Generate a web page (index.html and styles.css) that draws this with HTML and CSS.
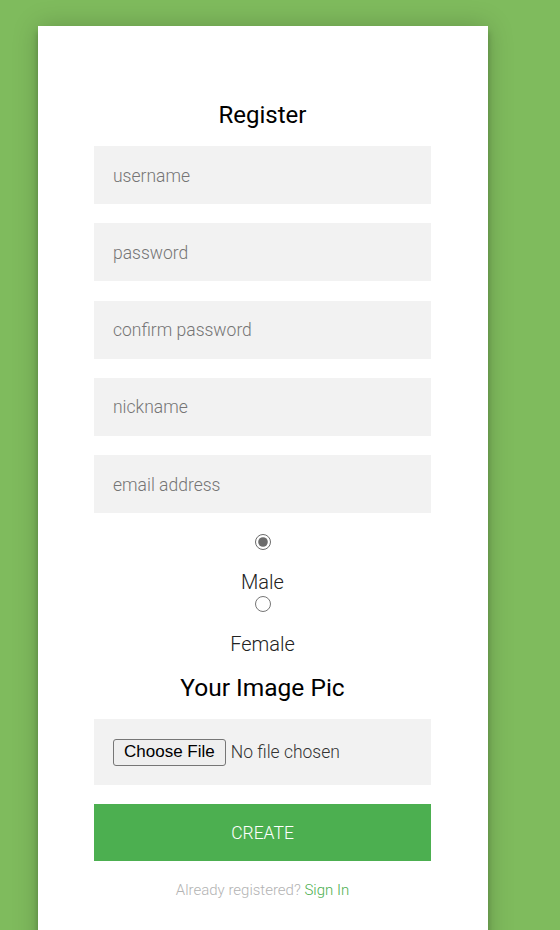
FILE: index.html
```html
<!DOCTYPE html>
<html lang="en">
<head>
<meta charset="utf-8">
<title>Register</title>
<link rel="stylesheet" href="styles.css">
</head>
<body>
<div class="page">
  <form class="form">
    <h2 class="title">Register</h2>
    <input class="field" type="text" placeholder="username">
    <input class="field" type="password" placeholder="password">
    <input class="field" type="password" placeholder="confirm password">
    <input class="field" type="text" placeholder="nickname">
    <input class="field" type="text" placeholder="email address">
    <div class="gender">
      <label class="option"><input class="radio" type="radio" name="gender" checked><span class="option-text">Male</span></label>
      <label class="option"><input class="radio" type="radio" name="gender"><span class="option-text">Female</span></label>
    </div>
    <h2 class="title title-pic">Your Image Pic</h2>
    <div class="file-box">
      <input class="file" type="file">
    </div>
    <button class="create" type="button">create</button>
    <p class="message">Already registered? <a href="#">Sign In</a></p>
  </form>
</div>
</body>
</html>
```
FILE: styles.css
```css
html, body {
  margin: 0;
  padding: 0;
}
body {
  background: #7fbb5d;
  font-family: Roboto, "Noto Sans", Arial, sans-serif;
  font-weight: 300;
  min-height: 930px;
  overflow: hidden;
}
.page {
  padding: 26px 0 0 38px;
}
.form {
  width: 450px;
  box-sizing: border-box;
  min-height: 960px;
  background: #fff;
  padding: 75px 57px 40px 56px;
  display: flex;
  flex-direction: column;
  align-items: stretch;
  text-align: center;
  box-shadow: 0 0 25px rgba(0,0,0,0.2), 0 6px 6px rgba(0,0,0,0.24);
}
.title {
  margin: 0 0 17px;
  font-size: 24px;
  font-weight: 400;
  line-height: 28px;
  color: #000;
}
.field {
  display: block;
  width: 100%;
  height: 58px;
  box-sizing: border-box;
  margin: 0 0 19.25px;
  padding: 1px 19px 0;
  border: 0;
  outline: 0;
  background: #f2f2f2;
  font-family: Roboto, Arial, sans-serif;
  font-weight: 300;
  font-size: 17.5px;
  color: #333;
}
.field::placeholder {
  color: #757575;
}
.gender {
  display: flex;
  flex-direction: column;
  align-items: center;
  margin-top: 0;
}
.option {
  display: flex;
  flex-direction: column;
  align-items: center;
}
.radio {
  width: 16px;
  height: 16px;
  margin: 2px 0 0;
  accent-color: #6b6b6b;
}
.option-text {
  font-size: 20px;
  line-height: 24px;
  color: #222;
  margin-top: 20px;
}
.title-pic {
  font-size: 24.5px;
  margin-top: 18px;
  margin-bottom: 17px;
}
.file-box {
  background: #f2f2f2;
  height: 66px;
  box-sizing: border-box;
  padding: 0 19px;
  display: flex;
  align-items: center;
  margin-bottom: 19px;
}
.file {
  font-family: Roboto, Arial, sans-serif;
  font-weight: 300;
  font-size: 17.5px;
  color: #333;
}
.file::file-selector-button {
  font-family: "Liberation Sans", Arial, sans-serif;
  font-weight: 400;
  font-size: 17px;
  height: 27px;
  padding: 0 10px;
  margin-right: 5px;
  border: 1px solid #767676;
  border-radius: 3px;
  background: #efefef;
  color: #000;
}
.create {
  height: 57px;
  padding-top: 2px;
  border: 0;
  background: #4caf50;
  color: #fff;
  text-transform: uppercase;
  font-family: Roboto, Arial, sans-serif;
  font-weight: 300;
  font-size: 17.5px;
}
.message {
  margin: 20px 0 0;
  font-size: 15px;
  color: #b3b3b3;
}
.message a {
  color: #4caf50;
  text-decoration: none;
}
```
